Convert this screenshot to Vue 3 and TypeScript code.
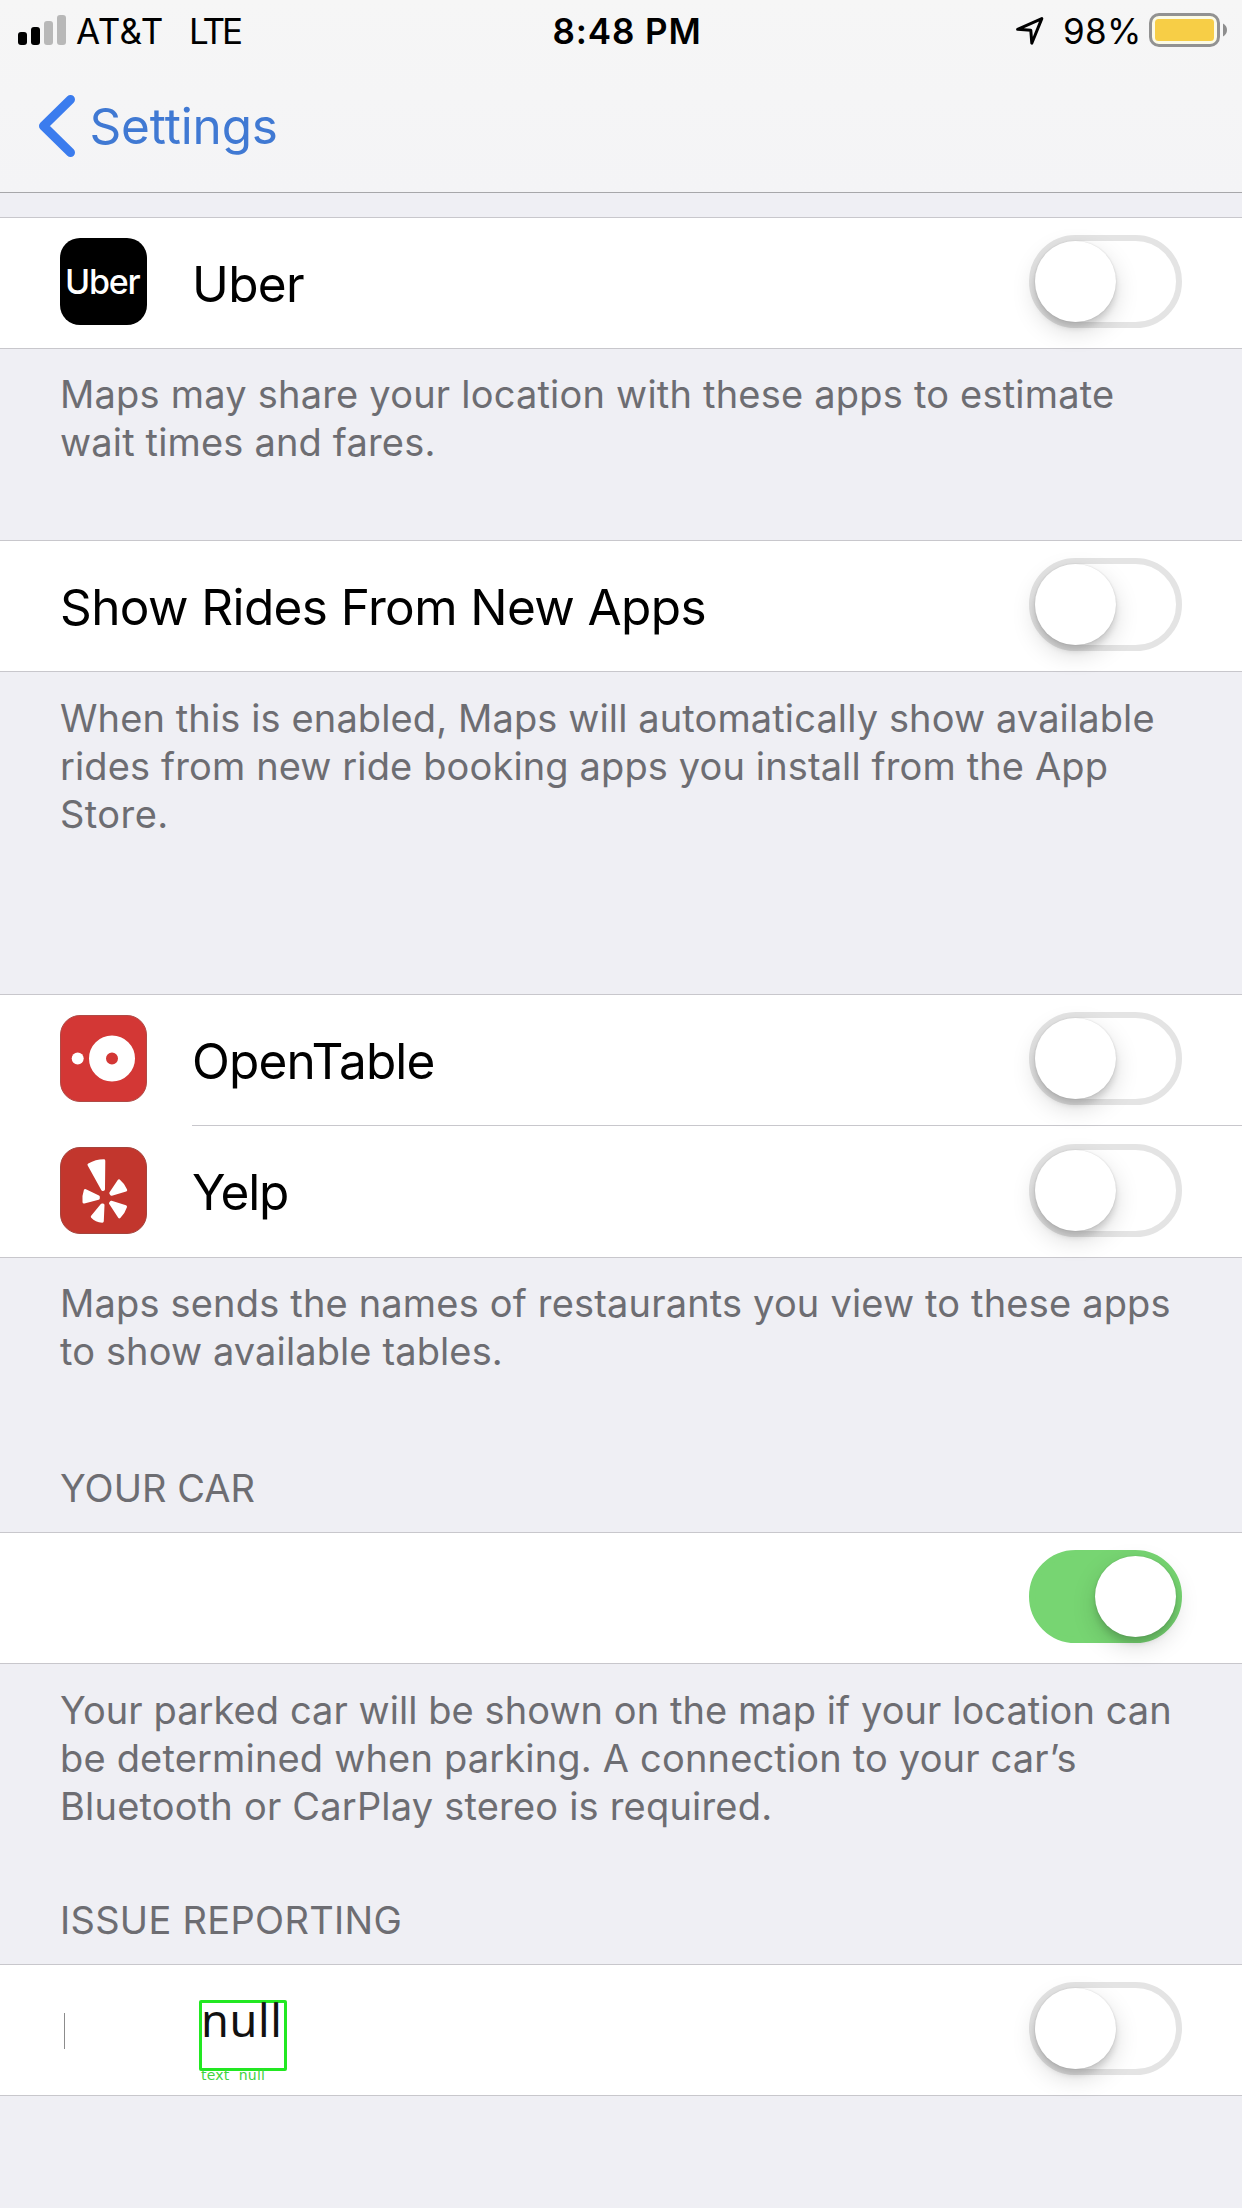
<script setup lang="ts">
interface Line {
  text: string
  spacing: number
  indent: number
}

interface Row {
  id: string
  label?: Line
  icon?: 'uber' | 'opentable' | 'yelp'
  on: boolean
  annotated?: boolean
}

interface Section {
  id: string
  header?: Line
  rows: Row[]
  footer: Line[]
  size: string
}

const line = (text: string, spacing: number, indent = 0): Line => ({ text, spacing, indent })
const lineStyle = (l: Line) => ({ letterSpacing: `${l.spacing}px`, paddingLeft: `${l.indent}px` })

const sections: Section[] = [
  {
    id: 'rides',
    size: 'after-short',
    rows: [{ id: 'uber', label: line('Uber', -0.67), icon: 'uber', on: false }],
    footer: [
      line('Maps may share your location with these apps to estimate', 0.21, 1),
      line('wait times and fares.', 0.17, 1),
    ],
  },
  {
    id: 'new-apps',
    size: 'after-tall',
    rows: [{ id: 'show-rides', label: line('Show Rides From New Apps', -0.6), on: false }],
    footer: [
      line('When this is enabled, Maps will automatically show available', 0.118, 1),
      line('rides from new ride booking apps you install from the App', 0.125, 1),
      line('Store.', 0.45, 1),
    ],
  },
  {
    id: 'tables',
    size: 'after-tables',
    rows: [
      { id: 'opentable', label: line('OpenTable', -0.85), icon: 'opentable', on: false },
      { id: 'yelp', label: line('Yelp', -1.2), icon: 'yelp', on: false },
    ],
    footer: [
      line('Maps sends the names of restaurants you view to these apps', 0.175, 1),
      line('to show available tables.', 0.12, 1),
    ],
  },
  {
    id: 'car',
    size: 'after-car',
    header: line('YOUR CAR', 0.05, 1),
    rows: [{ id: 'parked', on: true }],
    footer: [
      line('Your parked car will be shown on the map if your location can', 0.065, 1),
      line('be determined when parking. A connection to your car’s', 0.175, 1),
      line('Bluetooth or CarPlay stereo is required.', 0.2, 1),
    ],
  },
  {
    id: 'issues',
    size: 'after-last',
    header: line('ISSUE REPORTING', 0.3, 1),
    rows: [{ id: 'issue', on: false, annotated: true }],
    footer: [],
  },
]
</script>

<template>
  <main class="screen">
    <header class="top">
      <div class="status">
        <div class="status-left">
          <svg class="signal" width="48" height="30" viewBox="0 0 48 30">
            <rect x="0" y="17" width="9" height="13" rx="3" fill="#000" />
            <rect x="13" y="12" width="9" height="18" rx="3" fill="#000" />
            <rect x="26" y="6" width="9" height="24" rx="3" fill="#b8b8b8" />
            <rect x="39" y="0" width="9" height="30" rx="3" fill="#b8b8b8" />
          </svg>
          <span class="carrier">AT&amp;T</span>
          <span class="network">LTE</span>
        </div>
        <span class="time">8:48 PM</span>
        <div class="status-right">
          <svg class="location" width="30" height="30" viewBox="0 0 30 30">
            <path d="M2.600 13.300 26.800 2.600 16.800 27.200 15.800 14.300Z" fill="none" stroke="#000" stroke-width="3" stroke-linejoin="round" />
          </svg>
          <span class="percent">98%</span>
          <svg class="battery" width="79" height="34" viewBox="0 0 79 34">
            <rect x="1.500" y="1.500" width="68" height="31" rx="8.500" fill="#fbfae6" stroke="#929292" stroke-width="3" />
            <rect x="6" y="6" width="59" height="22" rx="3.500" fill="#f7ce46" />
            <path d="M74 10.500C76.600 12 78 14.400 78 17S76.600 22 74 23.500Z" fill="#8e8e8e" />
          </svg>
        </div>
      </div>
      <nav class="nav">
        <svg class="chevron" width="38" height="64" viewBox="0 0 38 64">
          <path d="M32.500 5.500 5.500 32 32.500 58.500" fill="none" stroke="#3b7cee" stroke-width="9" stroke-linecap="round" stroke-linejoin="round" />
        </svg>
        <span class="back">Settings</span>
      </nav>
    </header>

    <section v-for="s in sections" :key="s.id" class="section">
      <h2 v-if="s.header" class="header" :style="lineStyle(s.header)">{{ s.header.text }}</h2>
      <div class="group">
        <div v-for="r in s.rows" :key="r.id" class="row">
          <svg v-if="r.icon" class="icon" width="87" height="87" viewBox="0 0 87 87">
            <template v-if="r.icon === 'uber'">
              <rect width="87" height="87" rx="20" fill="#000" />
              <text x="5" y="55.500" class="wordmark">Uber</text>
            </template>
            <template v-else-if="r.icon === 'opentable'">
              <rect x=".5" y=".5" width="86" height="86" rx="19.500" fill="#d33735" stroke="#b04a46" />
              <circle cx="17.700" cy="43.500" r="6" fill="#fff" />
              <circle cx="52" cy="43.500" r="14.500" fill="none" stroke="#fff" stroke-width="17" />
            </template>
            <template v-else>
              <rect x=".5" y=".5" width="86" height="86" rx="19.500" fill="#c2362d" stroke="#a5443d" />
              <g fill="#fff" stroke="#fff" stroke-width="3" stroke-linejoin="round">
                <path d="M29 17.800Q36 13.900 43.800 13.800L43.500 42.300 42.700 42.500Z" />
                <path d="M59 33.800Q63.500 37.500 65.700 43L51.500 47.300 50.800 46Z" />
                <path d="M25.300 43.500Q23.300 49 24 55L38.300 51.300 38.300 49.800Z" />
                <path d="M43 58 42.300 74.200Q36 73.800 32.300 69.800L42 58Z" />
                <path d="M51.200 55.200 65.500 59.800Q63.500 66 59.300 69.800L50.500 56.300Z" />
              </g>
            </template>
          </svg>
          <span v-if="r.label" class="label" :style="lineStyle(r.label)">{{ r.label.text }}</span>
          <template v-if="r.annotated">
            <i class="caret"></i>
            <div class="box">
              <span class="box-text">null</span>
              <span class="box-tag">text&nbsp; null</span>
            </div>
          </template>
          <button class="switch" :class="{ on: r.on }" type="button" role="switch" :aria-checked="r.on">
            <i class="thumb"></i>
          </button>
        </div>
      </div>
      <div class="footer" :class="s.size">
        <p v-for="l in s.footer" :key="l.text" class="note" :style="lineStyle(l)">{{ l.text }}</p>
      </div>
    </section>
  </main>
</template>

<style>
body {
  margin: 0;
  background: #efeff4;
}
</style>

<style scoped>
.screen {
  width: 1242px;
  height: 2208px;
  overflow: hidden;
  background: #efeff4;
  font-family: "Inter", "Liberation Sans", sans-serif;
  color: #000;
}
.top {
  box-sizing: border-box;
  height: 193px;
  margin-bottom: 24px;
  background: linear-gradient(#f6f6f6, #f4f4f6);
  border-bottom: 1px solid #a7a7aa;
}
.status {
  display: grid;
  grid-template-columns: 552.5px 1fr auto;
  height: 53px;
  padding-top: 9px;
  box-sizing: border-box;
  font-size: 35px;
  line-height: 44px;
  white-space: nowrap;
}
.status-left,
.status-right {
  display: flex;
  align-items: flex-start;
}
.signal {
  margin: 6px 10px 0 18px;
}
.carrier {
  width: 113px;
  letter-spacing: 0.5px;
}
.network {
  letter-spacing: -3px;
}
.time {
  font-weight: 600;
  letter-spacing: 0.9px;
}
.status-right {
  padding-right: 14px;
}
.location {
  margin: 7px 18px 0 0;
}
.percent {
  width: 86px;
  letter-spacing: 0.32px;
}
.battery {
  margin-top: 4px;
}
.nav {
  display: flex;
  align-items: flex-start;
  padding: 41px 0 0 38px;
}
.back {
  margin: 2px 0 0 13.5px;
  font-size: 49.5px;
  line-height: 60px;
  letter-spacing: -0.15px;
  color: #4079d3;
}
.header {
  height: 68px;
  margin: 0 0 0 59px;
  font-size: 38px;
  font-weight: 400;
  line-height: 48px;
  color: #6d6d72;
}
.group {
  background: #fff;
  border-top: 1px solid #c8c7cc;
  border-bottom: 1px solid #c8c7cc;
}
.row {
  display: flex;
  align-items: center;
  box-sizing: border-box;
  height: 130px;
  padding: 0 60px 3px 60px;
}
.row + .row {
  height: 132px;
  padding-bottom: 1px;
  background: linear-gradient(#c8c7cc, #c8c7cc) 192px 0 / 1050px 1px no-repeat;
}
.icon {
  margin-right: 45px;
}
.wordmark {
  font-size: 34px;
  font-weight: 500;
  letter-spacing: -1.2px;
  fill: #fff;
}
.label {
  margin-top: 5px;
  font-size: 49.5px;
  line-height: 60px;
  white-space: nowrap;
}
.row + .row .label {
  margin-top: 3px;
}
.caret {
  width: 1px;
  height: 36px;
  margin: 5px 134px 0 4px;
  background: #8c8c8c;
}
.box {
  position: relative;
  box-sizing: border-box;
  width: 88px;
  height: 71px;
  margin-top: 14px;
  border: 3px solid #22e822;
  border-radius: 2px;
  font-family: "Noto Sans", sans-serif;
}
.box-text {
  display: block;
  margin: -13px 0 0 -1px;
  font-size: 45px;
  line-height: 60px;
  letter-spacing: 0.7px;
  color: #111;
}
.box-tag {
  position: absolute;
  left: -1px;
  top: 64px;
  font: 14px/16px "DejaVu Sans", sans-serif;
  letter-spacing: 0.2px;
  color: #3fd43f;
  white-space: nowrap;
}
.switch {
  box-sizing: border-box;
  width: 153px;
  height: 93px;
  margin-left: auto;
  padding: 0;
  border: 6px solid #e4e4e4;
  border-radius: 47px;
  background: #fff;
  display: flex;
}
.thumb {
  width: 81px;
  height: 81px;
  border-radius: 50%;
  background: #fff;
  box-shadow: 0 9px 24px rgba(0, 0, 0, 0.15), 0 6px 6px rgba(0, 0, 0, 0.12), 0 0 2px rgba(0, 0, 0, 0.14);
}
.switch.on {
  justify-content: flex-end;
  border-color: #77d572;
  background: #77d572;
}
.footer {
  box-sizing: border-box;
  padding: 21px 0 0 59px;
}
.after-short {
  height: 191px;
}
.after-tall {
  height: 322px;
  padding-top: 22px;
}
.after-tables {
  height: 206px;
}
.after-car {
  height: 232px;
  padding-top: 22px;
}
.after-last {
  height: 112px;
}
.note {
  margin: 0;
  font-size: 38px;
  line-height: 48px;
  color: #6d6d72;
  white-space: nowrap;
}
</style>
